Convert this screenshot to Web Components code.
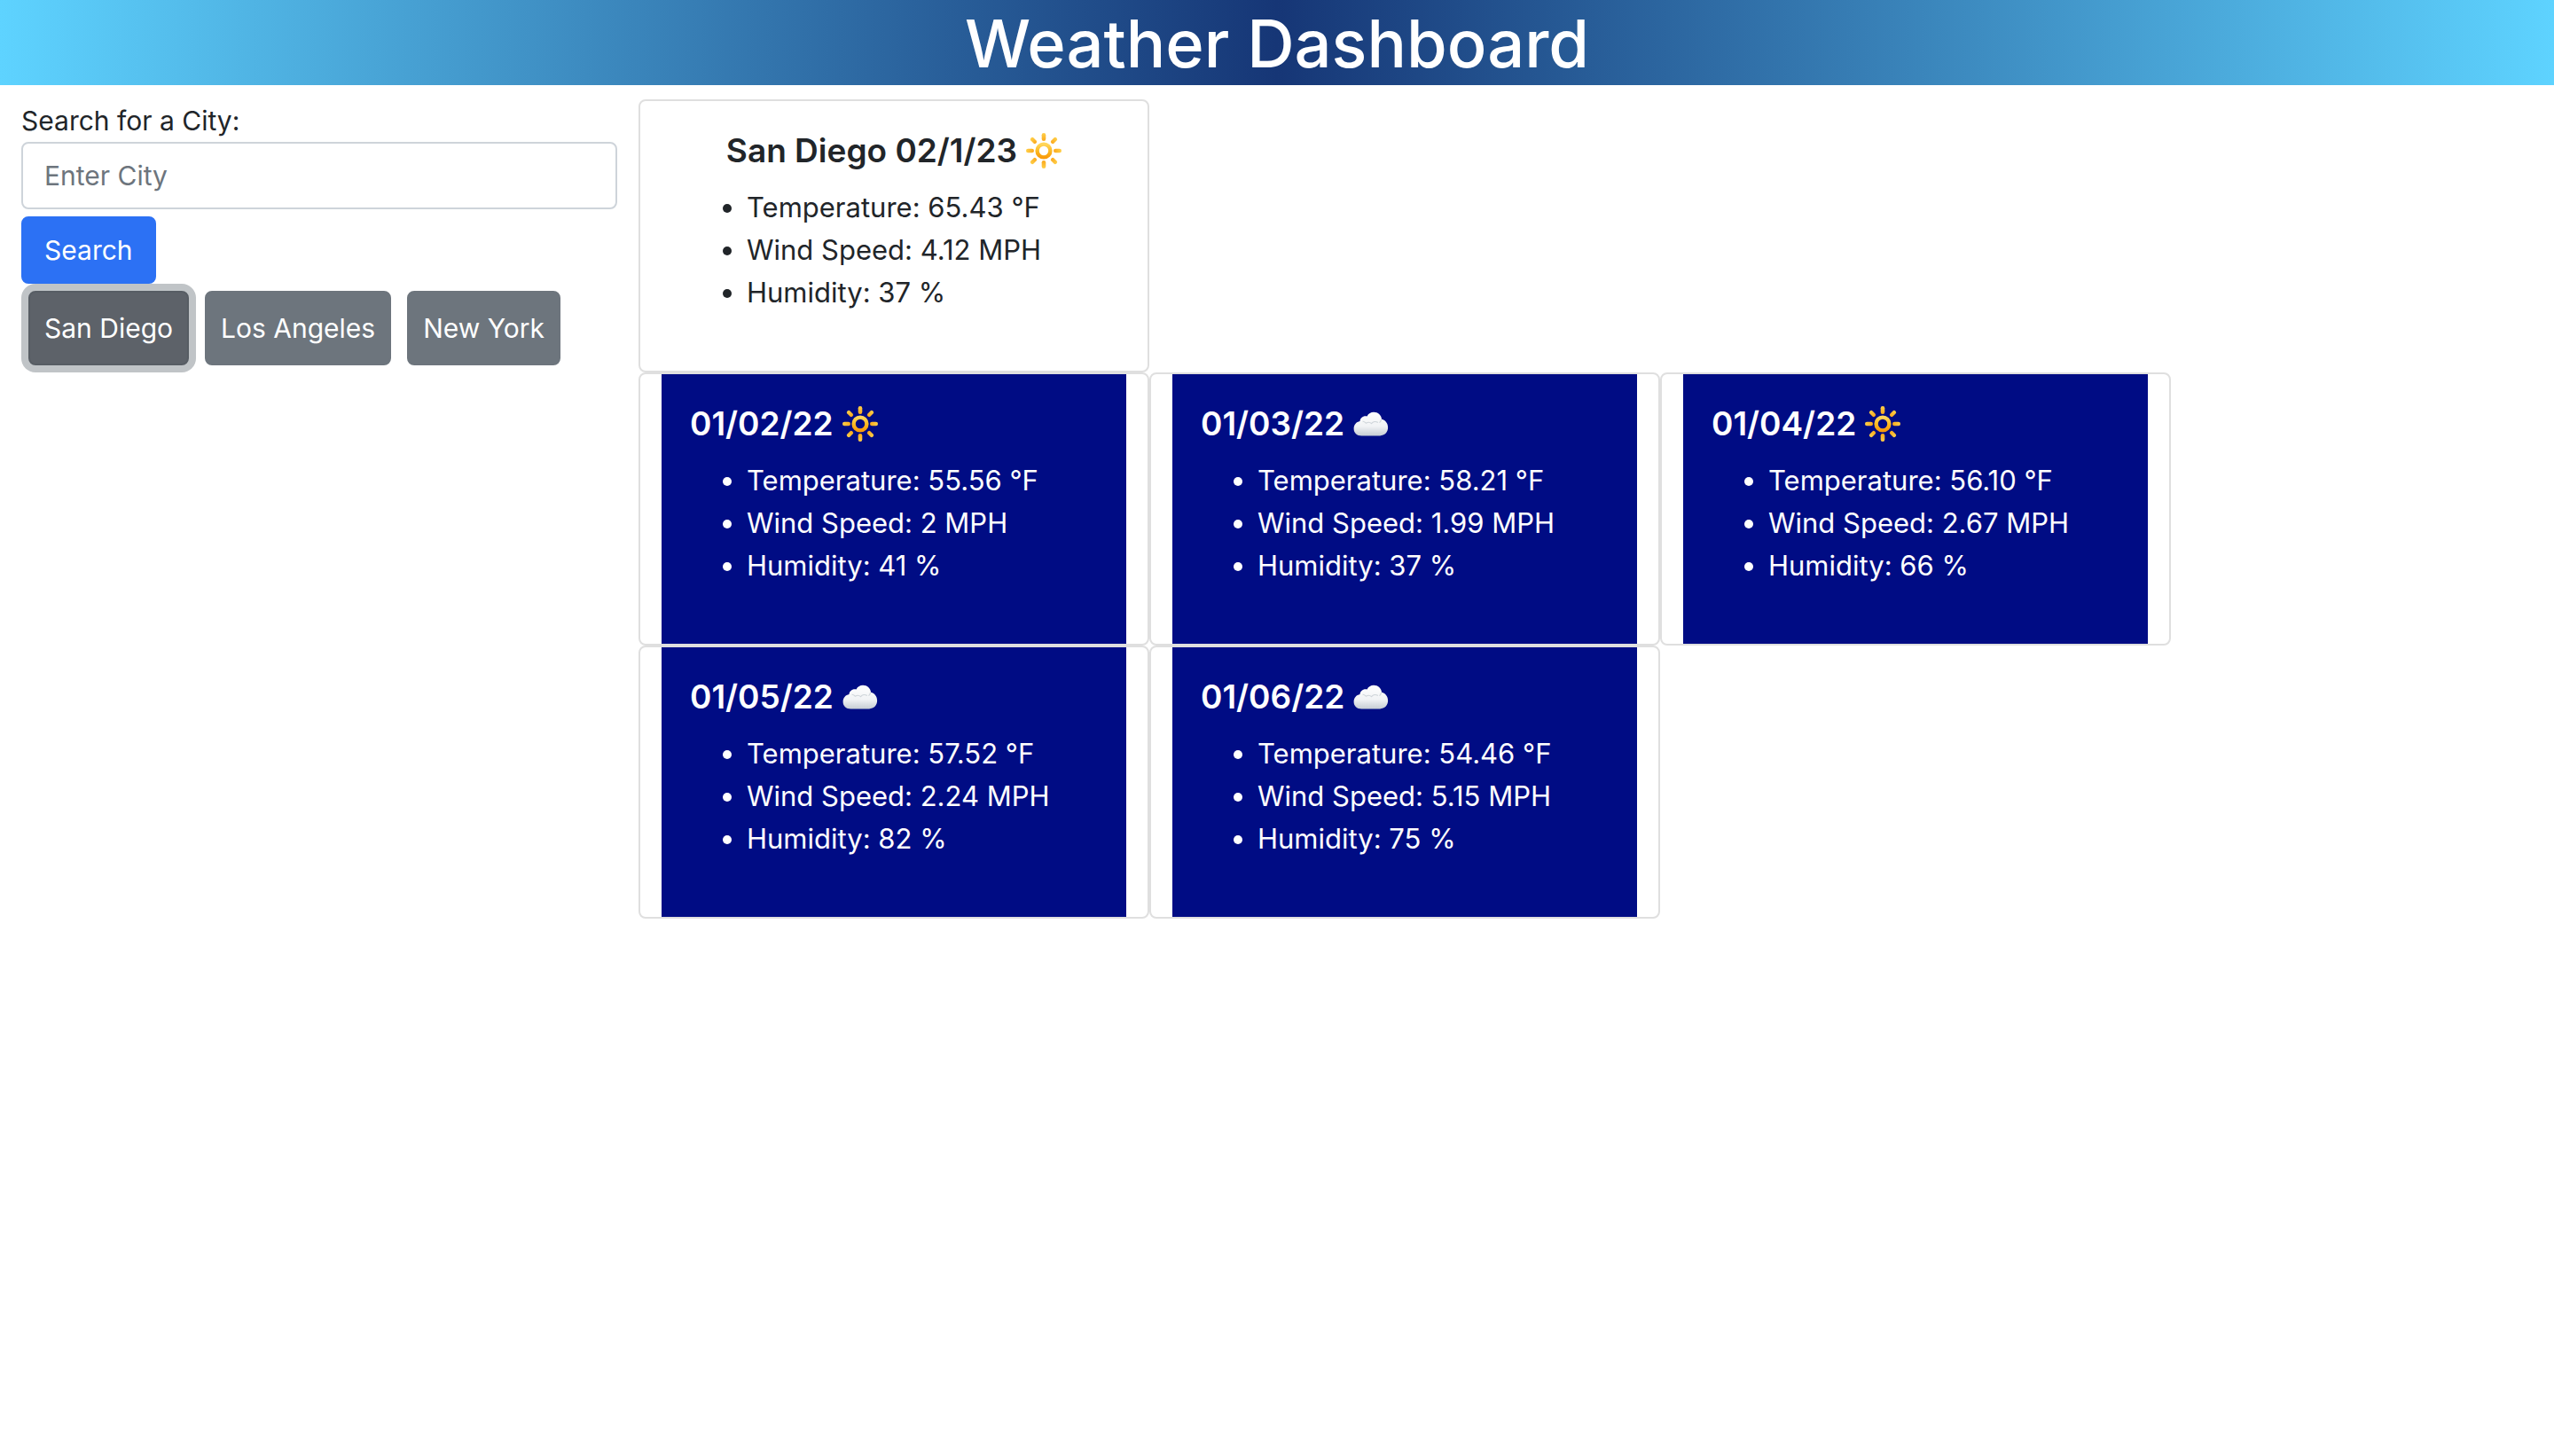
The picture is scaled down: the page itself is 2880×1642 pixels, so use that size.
<!DOCTYPE html>
<html lang="en">
<head>
<meta charset="utf-8">
<title>Weather Dashboard</title>
<style>
  body { margin: 0; background: #fff; color: #212529; font-family: Inter, "Liberation Sans", sans-serif; font-size: 31px; line-height: 48px; }
</style>
</head>
<body>
<weather-app></weather-app>

<template id="t-app">
  <style>
    :host { display: block; }
    main { display: grid; grid-template-columns: 1fr 3fr; align-items: start; padding-top: 16px; }
    .results { display: grid; grid-template-columns: repeat(3, 20vw); }
    .today { grid-column: 1 / -1; width: 20vw; }
  </style>
  <page-header>Weather Dashboard</page-header>
  <main>
    <city-search></city-search>
    <section class="results">
      <weather-card class="today" icon="sun" temp="65.43" wind="4.12" humidity="37">San Diego 02/1/23</weather-card>
      <weather-card forecast icon="sun" temp="55.56" wind="2" humidity="41">01/02/22</weather-card>
      <weather-card forecast icon="cloud" temp="58.21" wind="1.99" humidity="37">01/03/22</weather-card>
      <weather-card forecast icon="sun" temp="56.10" wind="2.67" humidity="66">01/04/22</weather-card>
      <weather-card forecast icon="cloud" temp="57.52" wind="2.24" humidity="82">01/05/22</weather-card>
      <weather-card forecast icon="cloud" temp="54.46" wind="5.15" humidity="75">01/06/22</weather-card>
    </section>
  </main>
</template>

<template id="t-header">
  <style>
    :host { display: block; background: linear-gradient(to right, #5ed3ff, #163676, #5ed3ff); }
    h1 { margin: 0; padding-top: 2px; font-size: 74px; line-height: 94px; font-weight: 500; text-align: center; color: #fff; }
  </style>
  <h1><slot></slot></h1>
</template>

<template id="t-search">
  <style>
    :host { display: block; padding: 0 24px; font-size: 30px; }
    form { display: flex; flex-direction: column; align-items: flex-start; gap: 8px; }
    .field { width: 100%; }
    label { display: block; }
    input, button { font: inherit; box-sizing: border-box; margin: 0; border-radius: 8px; }
    input { display: block; width: 100%; height: 76px; padding: 12px 24px; border: 2px solid #ced4da; background: #fff; color: #212529; outline: 0; }
    input::placeholder { color: #6d757d; opacity: 1; }
    button { border: 2px solid transparent; color: #fff; cursor: pointer; }
    .search { padding: 12px 24px; background: #2c71f4; border-color: #2c71f4; }
    .cities { display: flex; flex-wrap: wrap; gap: 18px; padding: 8px 8px 0; }
    .cities button { padding: 16px; background: #6d757d; border-color: #6d757d; }
    .cities button[aria-pressed="true"] { background: #5d6269; border-color: #575d64; box-shadow: 0 0 0 8px #c0c4c7; }
  </style>
  <form onsubmit="return false">
    <div class="field">
      <label for="city">Search for a City:</label>
      <input id="city" type="text" placeholder="Enter City">
    </div>
    <button class="search" type="submit">Search</button>
  </form>
  <div class="cities">
    <button type="button" aria-pressed="true">San Diego</button>
    <button type="button" aria-pressed="false">Los Angeles</button>
    <button type="button" aria-pressed="false">New York</button>
  </div>
</template>

<template id="t-card">
  <style>
    :host { display: block; box-sizing: border-box; border: 2px solid #dfdfdf; border-radius: 8px; padding: 0 24px; }
    .body { padding: 32px; }
    h5 { display: flex; align-items: center; justify-content: center; gap: 10px; margin: 0 0 16px; font-size: 37px; line-height: 48px; font-weight: 600; }
    ul { margin: 0 0 32px; padding-left: 64px; }
    :host([forecast]) .body { background: #000c84; color: #fff; }
    :host([forecast]) h5 { justify-content: flex-start; }
  </style>
  <div class="body">
    <h5><slot></slot><weather-icon></weather-icon></h5>
    <ul>
      <li>Temperature: <span data-k="temp"></span> °F</li>
      <li>Wind Speed: <span data-k="wind"></span> MPH</li>
      <li>Humidity: <span data-k="humidity"></span> %</li>
    </ul>
  </div>
</template>

<template id="t-icon">
  <style>
    :host { display: block; width: 40px; height: 40px; }
    svg { display: none; width: 40px; height: 40px; overflow: visible; }
    :host([kind="sun"]) .sun, :host([kind="cloud"]) .cloud { display: block; }
  </style>
  <svg class="sun" viewBox="0 0 40 40" aria-hidden="true">
    <defs>
      <linearGradient id="ray" x1="0" y1="0" x2="0" y2="1"><stop offset="0" stop-color="#ffd04a"/><stop offset="1" stop-color="#fba81c"/></linearGradient>
      <linearGradient id="ring" x1="0" y1="0" x2="0" y2="1"><stop offset="0" stop-color="#ffd65c"/><stop offset=".5" stop-color="#fdbb24"/><stop offset="1" stop-color="#f99c0c"/></linearGradient>
      <rect id="r" x="-2.3" y="-20" width="4.6" height="9" rx="2.3" fill="url(#ray)"/>
      <rect id="d" x="-2.2" y="-20.4" width="4.4" height="8.2" rx="2" fill="url(#ray)"/>
    </defs>
    <g transform="translate(20 20)">
      <use href="#r"/><use href="#r" transform="rotate(90)"/><use href="#r" transform="rotate(180)"/><use href="#r" transform="rotate(270)"/>
      <use href="#d" transform="rotate(45)"/><use href="#d" transform="rotate(135)"/><use href="#d" transform="rotate(225)"/><use href="#d" transform="rotate(315)"/>
      <circle r="7.4" fill="none" stroke="url(#ring)" stroke-width="4.4"/>
    </g>
  </svg>
  <svg class="cloud" viewBox="0 0 40 40" aria-hidden="true">
    <defs>
      <linearGradient id="cl" x1="0" y1="0" x2="0" y2="1"><stop offset="0" stop-color="#fff"/><stop offset=".6" stop-color="#f1f3f5"/><stop offset="1" stop-color="#c6cdd4"/></linearGradient>
    </defs>
    <path fill="url(#cl)" d="M9.4 33.4C4 33.4.6 29.9.6 25.4c0-4.3 2.8-7.6 6.9-8.4.2-4 4-6.6 8-5.6 1.7-3 4.4-4.6 7.6-4.6 4.8 0 8.5 3.3 9 8 4.4 1.1 7 4.8 7 9.3 0 5.4-3.6 9.3-9 9.3z"/>
    <path fill="none" stroke="#cfd5da" stroke-width="1.1" stroke-linecap="round" d="M14.5 19.2c2.1-1.4 4.5-1 6 .5 1.8-2.3 4.8-2.8 7-1.4M11 17.2c1.2.2 2.3.8 3 1.7M31.5 15.2c-.2 1.3-.8 2.4-1.7 3.2"/>
  </svg>
</template>

<script>
  class TemplateElement extends HTMLElement {
    constructor() {
      super();
      this.attachShadow({ mode: "open" })
        .append(document.getElementById(this.constructor.template).content.cloneNode(true));
    }
  }
  class WeatherIcon extends TemplateElement { static template = "t-icon"; }
  class WeatherCard extends TemplateElement {
    static template = "t-card";
    connectedCallback() {
      for (const span of this.shadowRoot.querySelectorAll("[data-k]"))
        span.textContent = this.getAttribute(span.dataset.k);
      this.shadowRoot.querySelector("weather-icon").setAttribute("kind", this.getAttribute("icon"));
    }
  }
  class PageHeader extends TemplateElement { static template = "t-header"; }
  class CitySearch extends TemplateElement { static template = "t-search"; }
  class WeatherApp extends TemplateElement { static template = "t-app"; }
  customElements.define("weather-icon", WeatherIcon);
  customElements.define("weather-card", WeatherCard);
  customElements.define("page-header", PageHeader);
  customElements.define("city-search", CitySearch);
  customElements.define("weather-app", WeatherApp);
</script>
</body>
</html>
